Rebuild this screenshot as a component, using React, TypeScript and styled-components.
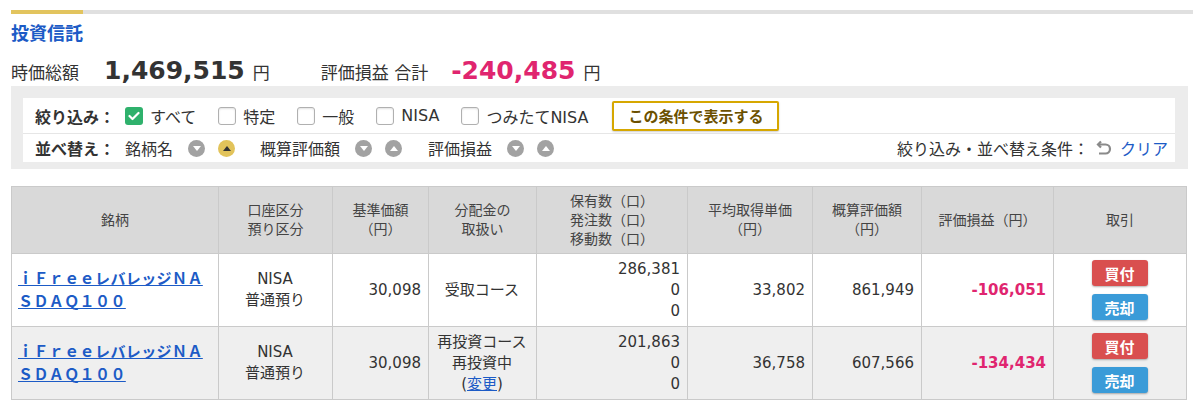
import React from "react";
import styled, { createGlobalStyle } from "styled-components";

const GlobalStyle = createGlobalStyle`
  html, body { margin: 0; padding: 0; background: #fff; }
  body {
    font-family: "DejaVu Sans", "Noto Sans CJK JP", sans-serif;
    color: #333;
  }
`;

const Page = styled.div`
  padding: 10px 0 0 11px;
  width: 1182px;
`;

const TopBar = styled.div`
  height: 4px;
  background: #e0e0e0;
  display: flex;
`;

const TopBarAccent = styled.div`
  width: 72px;
  background: #e2c45e;
`;

const Title = styled.h2`
  margin: 8px 0 0;
  font-size: 18px;
  line-height: 24px;
  font-weight: bold;
  color: #1c5bc6;
`;

const Summary = styled.div`
  display: flex;
  align-items: baseline;
  padding-top: 10px;
  height: 30px;
  line-height: 30px;
`;

const SumLabel = styled.span<{ $gap?: number }>`
  font-size: 17px;
  margin-left: ${(p) => p.$gap ?? 0}px;
`;

const SumValue = styled.span<{ $neg?: boolean }>`
  font-size: 25px;
  font-weight: bold;
  margin-left: ${(p) => (p.$neg ? 23 : 25)}px;
  color: ${(p) => (p.$neg ? "#e0256f" : "#333")};
`;

const Yen = styled.span`
  font-size: 17px;
  margin-left: 8px;
`;

const FilterPanel = styled.div`
  width: 1152px;
  background: #ececec;
  padding: 12px 13px 7px 12px;
`;

const FilterInner = styled.div`
  background: #fff;
`;

const FilterRow = styled.div`
  height: 35px;
  display: flex;
  align-items: center;
  padding-left: 12px;
  border-bottom: 1px solid #e6e6e6;
`;

const SortRow = styled.div`
  height: 28px;
  display: flex;
  align-items: center;
  padding-left: 12px;
  padding-right: 7px;
`;

const RowLabel = styled.span`
  font-size: 16px;
  font-weight: bold;
  width: 90px;
  flex: none;
`;

const Option = styled.label`
  display: flex;
  align-items: center;
  font-size: 16px;
  margin-right: 22px;
`;

const Box = styled.span<{ $checked?: boolean }>`
  width: 18px;
  height: 18px;
  box-sizing: border-box;
  border-radius: 3px;
  margin-right: 7px;
  display: flex;
  align-items: center;
  justify-content: center;
  background: ${(p) => (p.$checked ? "#2fb16c" : "#fff")};
  border: ${(p) => (p.$checked ? "none" : "1px solid #b0b0b0")};
  box-shadow: ${(p) => (p.$checked ? "none" : "inset 0 1px 2px rgba(0,0,0,0.12)")};
`;

const ApplyButton = styled.button`
  margin-left: 2px;
  height: 30px;
  padding: 0 14px;
  border: 2px solid #d6a700;
  border-radius: 2px;
  background: #fff;
  color: #6b5000;
  font-family: "Noto Sans CJK JP", sans-serif;
  font-weight: bold;
  font-size: 15px;
  box-shadow: 0 1px 2px rgba(0, 0, 0, 0.2);
  cursor: pointer;
`;

const SortLabel = styled.span<{ $gap?: number }>`
  font-size: 16px;
  margin-left: ${(p) => p.$gap ?? 0}px;
  margin-right: 15px;
`;

const SortButton = styled.span<{ $active?: boolean }>`
  width: 17px;
  height: 17px;
  border-radius: 50%;
  background: ${(p) => (p.$active ? "#e2c35a" : "#a2a2a2")};
  display: flex;
  align-items: center;
  justify-content: center;
  margin-right: 13px;
  flex: none;
`;

const Spacer = styled.div`
  flex: 1;
`;

const ConditionText = styled.span`
  font-size: 16px;
  margin-right: 6px;
`;

const ClearLink = styled.a`
  display: flex;
  align-items: center;
  gap: 8px;
  font-size: 16px;
  color: #1c5bc6;
  text-decoration: none;
`;

const Table = styled.table`
  margin-top: 17px;
  width: 1175px;
  border-collapse: collapse;
  table-layout: fixed;
  border: 1px solid #cacaca;
`;

const Th = styled.th`
  background: #d9d9d9;
  border: 1px solid #cacaca;
  font-size: 14px;
  line-height: 19px;
  font-weight: normal;
  color: #444;
  height: 66px;
  padding: 0 4px;
  text-align: center;
  vertical-align: middle;
`;

const Tr = styled.tr<{ $alt?: boolean }>`
  background: ${(p) => (p.$alt ? "#efefef" : "#fff")};
`;

const Td = styled.td<{ $align?: "left" | "center" | "right" }>`
  border: 1px solid #cacaca;
  font-size: 15px;
  line-height: 21px;
  height: 72px;
  padding: 0 7px 0 6px;
  text-align: ${(p) => p.$align ?? "right"};
  vertical-align: middle;
`;

const FundLink = styled.a`
  font-family: "Noto Sans CJK JP", sans-serif;
  font-weight: bold;
  font-size: 15px;
  line-height: 22px;
  color: #1c5bc6;
  text-decoration: underline;
  letter-spacing: 0.4px;
  word-break: break-all;
`;

const Loss = styled.span`
  font-weight: bold;
  color: #e0256f;
`;

const SmallLink = styled.a`
  color: #1c5bc6;
  text-decoration: underline;
`;

const TradeCell = styled.div`
  display: flex;
  flex-direction: column;
  align-items: center;
  gap: 8px;
`;

const TradeButton = styled.button<{ $kind: "buy" | "sell" }>`
  width: 56px;
  height: 26px;
  border: none;
  border-radius: 3px;
  color: #fff;
  font-family: "Noto Sans CJK JP", sans-serif;
  font-weight: bold;
  font-size: 15px;
  padding: 0;
  background: ${(p) => (p.$kind === "buy" ? "#d94f4f" : "#3a9bd8")};
  box-shadow: 0 1px 2px rgba(0, 0, 0, 0.3);
  cursor: pointer;
`;

const Check = () => (
  <svg width="12" height="10" viewBox="0 0 12 10">
    <polyline points="1.5,5 4.5,8 10.5,2" fill="none" stroke="#fff" strokeWidth="2.2" strokeLinecap="round" strokeLinejoin="round" />
  </svg>
);

const Tri = ({ up, color }: { up?: boolean; color: string }) => (
  <svg width="8" height="5" viewBox="0 0 8 5">
    <polygon points={up ? "0,5 8,5 4,0" : "0,0 8,0 4,5"} fill={color} />
  </svg>
);

const UndoIcon = () => (
  <svg width="17" height="16" viewBox="0 0 17 16">
    <path d="M3 4.5 H10.5 A4.5 4.5 0 0 1 10.5 13.5 H4" fill="none" stroke="#8a8a8a" strokeWidth="2.2" />
    <polyline points="6,1.5 3,4.5 6,7.5" fill="none" stroke="#8a8a8a" strokeWidth="2.2" />
  </svg>
);

const options = [
  { label: "すべて", checked: true },
  { label: "特定" },
  { label: "一般" },
  { label: "NISA" },
  { label: "つみたてNISA" },
];

const sorts = [
  { label: "銘柄名", gap: 0, active: "up" },
  { label: "概算評価額", gap: 12, active: "" },
  { label: "評価損益", gap: 13, active: "" },
];

const colWidths = [207, 114, 96, 108, 151, 125, 109, 132, 133];

type Row = {
  price: string;
  course: React.ReactNode;
  qty: string;
  avg: string;
  value: string;
  pl: string;
};

const rows: Row[] = [
  { price: "30,098", course: "受取コース", qty: "286,381", avg: "33,802", value: "861,949", pl: "-106,051" },
  {
    price: "30,098",
    course: (
      <>
        再投資コース
        <br />
        再投資中
        <br />
        (<SmallLink href="#">変更</SmallLink>)
      </>
    ),
    qty: "201,863",
    avg: "36,758",
    value: "607,566",
    pl: "-134,434",
  },
];

export default function App() {
  return (
    <>
      <GlobalStyle />
      <Page>
        <TopBar>
          <TopBarAccent />
        </TopBar>
        <Title>投資信託</Title>
        <Summary>
          <SumLabel>時価総額</SumLabel>
          <SumValue>1,469,515</SumValue>
          <Yen>円</Yen>
          <SumLabel $gap={51}>評価損益 合計</SumLabel>
          <SumValue $neg>-240,485</SumValue>
          <Yen>円</Yen>
        </Summary>
        <FilterPanel>
          <FilterInner>
            <FilterRow>
              <RowLabel>絞り込み：</RowLabel>
              {options.map((o) => (
                <Option key={o.label}>
                  <Box $checked={o.checked}>{o.checked && <Check />}</Box>
                  {o.label}
                </Option>
              ))}
              <ApplyButton>この条件で表示する</ApplyButton>
            </FilterRow>
            <SortRow>
              <RowLabel>並べ替え：</RowLabel>
              {sorts.map((s) => (
                <React.Fragment key={s.label}>
                  <SortLabel $gap={s.gap}>{s.label}</SortLabel>
                  <SortButton>
                    <Tri color="#fff" />
                  </SortButton>
                  <SortButton $active={s.active === "up"}>
                    <Tri up color={s.active === "up" ? "#333" : "#fff"} />
                  </SortButton>
                </React.Fragment>
              ))}
              <Spacer />
              <ConditionText>絞り込み・並べ替え条件：</ConditionText>
              <ClearLink href="#">
                <UndoIcon />
                クリア
              </ClearLink>
            </SortRow>
          </FilterInner>
        </FilterPanel>
        <Table>
          <colgroup>
            {colWidths.map((w, i) => (
              <col key={i} style={{ width: w }} />
            ))}
          </colgroup>
          <thead>
            <tr>
              <Th>銘柄</Th>
              <Th>
                口座区分
                <br />
                預り区分
              </Th>
              <Th>
                基準価額
                <br />
                （円）
              </Th>
              <Th>
                分配金の
                <br />
                取扱い
              </Th>
              <Th>
                保有数（口）
                <br />
                発注数（口）
                <br />
                移動数（口）
              </Th>
              <Th>
                平均取得単価
                <br />
                （円）
              </Th>
              <Th>
                概算評価額
                <br />
                （円）
              </Th>
              <Th>評価損益（円）</Th>
              <Th>取引</Th>
            </tr>
          </thead>
          <tbody>
            {rows.map((r, i) => (
              <Tr key={i} $alt={i % 2 === 1}>
                <Td $align="left">
                  <FundLink href="#">ｉＦｒｅｅレバレッジＮＡＳＤＡＱ１００</FundLink>
                </Td>
                <Td $align="center">
                  NISA
                  <br />
                  普通預り
                </Td>
                <Td>{r.price}</Td>
                <Td $align="center">{r.course}</Td>
                <Td>
                  {r.qty}
                  <br />0<br />0
                </Td>
                <Td>{r.avg}</Td>
                <Td>{r.value}</Td>
                <Td>
                  <Loss>{r.pl}</Loss>
                </Td>
                <Td $align="center">
                  <TradeCell>
                    <TradeButton $kind="buy">買付</TradeButton>
                    <TradeButton $kind="sell">売却</TradeButton>
                  </TradeCell>
                </Td>
              </Tr>
            ))}
          </tbody>
        </Table>
      </Page>
    </>
  );
}
